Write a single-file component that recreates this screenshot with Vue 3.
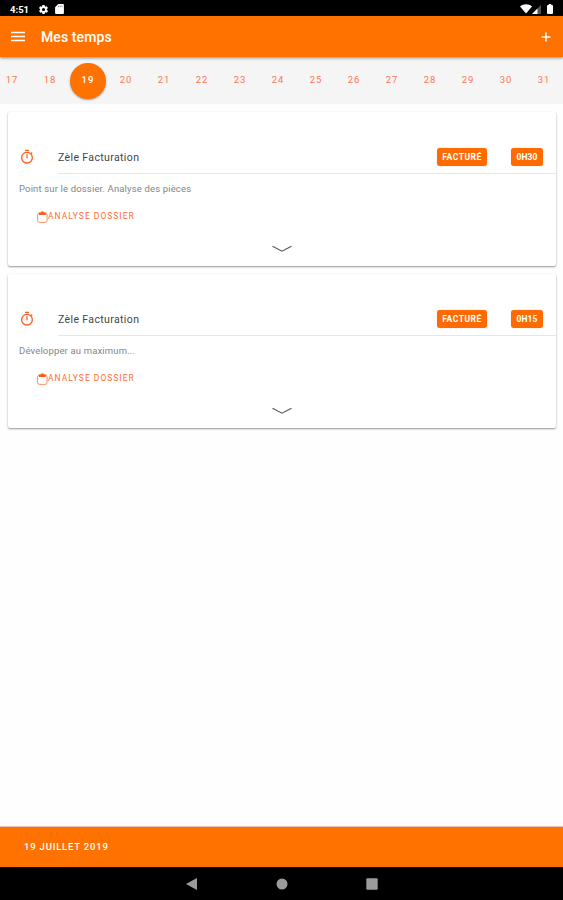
<template>
  <div class="screen">
    <div class="status-bar">
      <span class="clock">4:51</span>
      <svg class="status-gear" viewBox="0 0 24 24">
        <path fill="#fff" d="M19.4 13c0-.3.1-.6.1-1s0-.7-.1-1l2.1-1.600c.2-.2.2-.4.1-.6l-2-3.500c-.1-.2-.4-.3-.6-.2l-2.500 1c-.5-.4-1.100-.7-1.700-1l-.4-2.600c0-.3-.2-.5-.4-.5h-4c-.3 0-.5.2-.5.4l-.4 2.700c-.6.2-1.100.6-1.700 1l-2.500-1c-.2-.1-.5 0-.6.200l-2 3.500c-.1.200-.1.500.1.600L4.600 11c0 .3-.1.6-.1 1s0 .7.1 1l-2.100 1.600c-.2.200-.2.400-.1.600l2 3.500c.1.200.4.300.6.200l2.500-1c.5.400 1.100.7 1.700 1l.4 2.600c0 .300.200.500.500.500h4c.200 0 .400-.200.500-.400l.4-2.700c.6-.2 1.100-.6 1.700-1l2.500 1c.2.100.5 0 .6-.2l2-3.500c.1-.2.1-.5-.1-.6L19.400 13zM12 15.500a3.500 3.500 0 1 1 0-7 3.500 3.500 0 0 1 0 7z" />
      </svg>
      <svg class="status-sd" viewBox="0 0 9 10">
        <path fill="#fff" d="M3.200 0H8a.9.900 0 0 1 .9.900v8.200a.9.900 0 0 1-.9.900H1a.9.900 0 0 1-.9-.9V3.200z" />
        <path stroke="#777" stroke-width=".8" d="M3.500 1.500v1.700M5.200 1.500v1.700M6.900 1.500v1.700" />
      </svg>
      <div class="status-right">
        <svg width="12" height="10" viewBox="0 0 12 10">
          <path fill="#fff" d="M0 2.600C3.300-.4 8.700-.4 12 2.600L6 9.600z" />
        </svg>
        <svg width="9" height="9" viewBox="0 0 9 9">
          <path fill="#555" d="M9 0v9H0z" />
          <path fill="#fff" d="M5.500 3.500V9H0z" />
        </svg>
        <svg class="battery" width="6" height="10" viewBox="0 0 6 10">
          <path fill="#fff" d="M1.800 0h2.400v1H5a1 1 0 0 1 1 1v7a1 1 0 0 1-1 1H1a1 1 0 0 1-1-1V2a1 1 0 0 1 1-1h.8z" />
        </svg>
      </div>
    </div>

    <header class="app-bar">
      <svg class="menu-icon" viewBox="0 0 14 11">
        <path stroke="#fff" stroke-width="1.700" d="M0 1.500h14M0 5.500h14M0 9.500h14" />
      </svg>
      <h1>Mes temps</h1>
      <svg class="plus-icon" viewBox="0 0 10 10">
        <path stroke="#fff" stroke-width="1.500" d="M5 .5v9M.5 5h9" />
      </svg>
    </header>

    <div class="days">
      <button
        v-for="day in days"
        :key="day"
        :class="{ day: true, selected: day === selectedDay }"
        @click="selectedDay = day"
      >
        <span>{{ day }}</span>
      </button>
    </div>

    <main class="entries">
      <article v-for="entry in entries" :key="entry.id" class="card">
        <div class="card-header">
          <svg class="timer-icon" viewBox="0 0 24 24">
            <path fill="#ff6325" d="M15 1H9v2h6V1zm-4 13h2V8h-2v6zm8-6.600 1.400-1.400c-.4-.5-.9-1-1.400-1.400l-1.400 1.400A9 9 0 1 0 19 7.400zM12 20a7 7 0 1 1 0-14 7 7 0 0 1 0 14z" />
          </svg>
          <div class="card-title">
            <span class="title">{{ entry.title }}</span>
            <span class="chip status">{{ entry.status }}</span>
            <span class="chip duration">{{ entry.duration }}</span>
          </div>
        </div>
        <p class="description">{{ entry.description }}</p>
        <div class="task">
          <svg class="clipboard-icon" viewBox="0 0 11 12">
            <rect x=".6" y="2" width="9.500" height="9.400" rx="2" fill="none" stroke="#ff8050" stroke-width=".9" />
            <path fill="#ff5a1c" d="M2 1.500h1.900C4.200.7 4.700.3 5.400.3s1.200.4 1.500 1.200h1.900v2.400H2z" />
          </svg>
          <span>{{ entry.task }}</span>
        </div>
        <svg class="chevron" viewBox="0 0 20 7">
          <path fill="none" stroke="#555" stroke-width="1.100" d="M.5 1.200 10 6.200l9.500-5" />
        </svg>
      </article>
    </main>

    <footer class="date-bar">19 JUILLET 2019</footer>

    <nav class="nav-bar">
      <svg viewBox="0 0 12 12"><path fill="#9b9b9b" d="M11 0v12L0 6z" /></svg>
      <svg viewBox="0 0 12 12"><circle cx="6" cy="6" r="5.500" fill="#9b9b9b" /></svg>
      <svg viewBox="0 0 12 12"><rect x=".3" y=".3" width="11.400" height="11.400" rx=".8" fill="#9b9b9b" /></svg>
    </nav>
  </div>
</template>

<script setup>
import { ref } from 'vue';

const days = Array.from({ length: 15 }, (_, i) => i + 17);
const selectedDay = ref(19);

const entries = ref([
  {
    id: 1,
    title: 'Zèle Facturation',
    status: 'FACTURÉ',
    duration: '0H30',
    description: 'Point sur le dossier. Analyse des pièces',
    task: 'ANALYSE DOSSIER',
  },
  {
    id: 2,
    title: 'Zèle Facturation',
    status: 'FACTURÉ',
    duration: '0H15',
    description: 'Développer au maximum...',
    task: 'ANALYSE DOSSIER',
  },
]);
</script>

<style>
body {
  margin: 0;
  background: #fff;
}
</style>

<style scoped>
.screen {
  display: flex;
  flex-direction: column;
  width: 100%;
  height: 100vh;
  overflow: hidden;
  background: #fefefe;
  font-family: Roboto, "Liberation Sans", sans-serif;
}

svg {
  display: block;
  flex: none;
}

.status-bar {
  display: flex;
  align-items: center;
  flex: none;
  box-sizing: border-box;
  height: 16px;
  padding: 2px 10px 0;
  background: #000;
  color: #fff;
}

.clock {
  width: 28px;
  font-size: 9.5px;
  font-weight: 700;
}

.status-gear {
  width: 11px;
  height: 11px;
}

.status-sd {
  width: 9px;
  height: 10px;
  margin-left: 6px;
}

.status-right {
  display: flex;
  align-items: center;
  margin-left: auto;
}

.battery {
  margin-left: 6px;
}

.app-bar {
  position: relative;
  z-index: 1;
  display: flex;
  align-items: center;
  flex: none;
  box-sizing: border-box;
  height: 41px;
  padding: 0 12px 0 11px;
  background: #ff7200;
  box-shadow: 0 1px 3px rgba(0, 0, 0, 0.45);
}

.menu-icon {
  width: 14px;
  height: 11px;
}

h1 {
  margin: 0 0 0 16px;
  color: #fff;
  font-size: 14px;
  font-weight: 500;
  letter-spacing: 0.1px;
}

.plus-icon {
  width: 10px;
  height: 10px;
  margin-left: auto;
}

.days {
  display: flex;
  align-items: center;
  flex: none;
  height: 47px;
  margin-left: -7px;
  background: #f5f5f5;
}

.day {
  display: flex;
  align-items: center;
  justify-content: center;
  flex: none;
  width: 38px;
  height: 36px;
  padding: 0;
  border: 0;
  background: none;
  color: #ff7450;
  font-family: inherit;
  font-size: 9.5px;
  letter-spacing: 1px;
}

.day span {
  display: flex;
  align-items: center;
  justify-content: center;
  box-sizing: border-box;
  width: 36px;
  height: 36px;
  padding-bottom: 2px;
  border-radius: 50%;
}

.day.selected span {
  background: #ff7200;
  box-shadow: 0 1px 2px rgba(0, 0, 0, 0.35);
  color: #fff;
  font-weight: 500;
}

.entries {
  display: flex;
  flex-direction: column;
  flex: 1;
  gap: 8px;
  padding: 8px 7px 0 8px;
}

.card {
  box-sizing: border-box;
  height: 154px;
  padding-top: 28px;
  border-radius: 2px;
  background: #fff;
  box-shadow: 0 1px 2px rgba(0, 0, 0, 0.42);
}

.card-header {
  display: flex;
  align-items: center;
  height: 34px;
}

.timer-icon {
  width: 16px;
  height: 16px;
  margin: 0 23px 0 11px;
}

.card-title {
  display: flex;
  align-items: center;
  flex: 1;
  box-sizing: border-box;
  height: 34px;
  padding-right: 13px;
  border-bottom: 1px solid #e6e6e6;
}

.title {
  margin-right: auto;
  padding-top: 1px;
  color: #444;
  font-size: 10.5px;
  letter-spacing: 0.37px;
}

.chip {
  box-sizing: border-box;
  height: 18px;
  border-radius: 3px;
  background: #ff6b00;
  box-shadow: 0 0 1px rgba(255, 90, 20, 0.6);
  color: #fff;
  font-size: 8.5px;
  font-weight: 700;
  line-height: 18px;
  letter-spacing: 0.5px;
  text-align: center;
}

.status {
  width: 50px;
}

.duration {
  width: 32px;
  margin-left: 24px;
  letter-spacing: 0.1px;
}

.description {
  margin: 9px 0 0 11px;
  color: #858585;
  font-size: 9.5px;
  line-height: 12px;
  letter-spacing: 0.15px;
}

.task {
  display: flex;
  align-items: center;
  height: 14px;
  margin: 14px 0 0 29px;
  color: #ff6b35;
  font-size: 8.5px;
  letter-spacing: 1px;
}

.clipboard-icon {
  width: 11px;
  height: 12px;
  margin-top: 1px;
}

.chevron {
  width: 20px;
  height: 7px;
  margin: 22px auto 0;
}

.date-bar {
  flex: none;
  box-sizing: border-box;
  height: 40px;
  padding-left: 24px;
  background: #ff7200;
  box-shadow: 0 -1px 1px rgba(200, 90, 60, 0.35);
  color: #fff;
  font-size: 9.5px;
  font-weight: 500;
  line-height: 39px;
  letter-spacing: 0.8px;
}

.nav-bar {
  display: flex;
  align-items: center;
  justify-content: center;
  flex: none;
  gap: 78px;
  height: 33px;
  background: #000;
}

.nav-bar svg {
  width: 12px;
  height: 12px;
}
</style>
